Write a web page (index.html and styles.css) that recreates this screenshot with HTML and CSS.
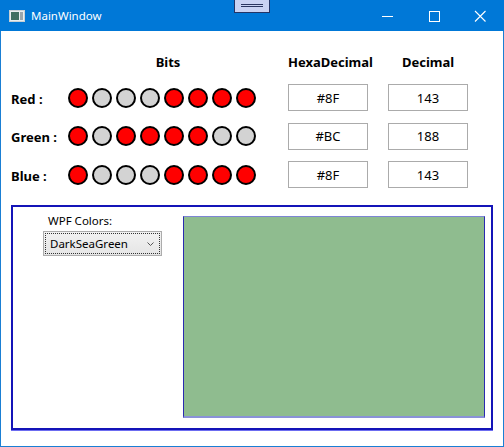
FILE: index.html
```html
<!DOCTYPE html>
<html>
<head>
<meta charset="utf-8">
<link rel="stylesheet" href="styles.css">
</head>
<body>
<div class="window">
  <div class="titlebar">
    <svg class="appicon" width="16" height="12" viewBox="0 0 16 12">
      <rect x="0.5" y="0.5" width="15" height="11" fill="#e8eef0" stroke="#c8d0d4"/>
      <rect x="2" y="2" width="8" height="8" fill="#3f6f62"/>
      <rect x="11" y="2" width="3" height="8" fill="#9aa6ac"/>
    </svg>
    <span class="title">MainWindow</span>
    <div class="handle"><span></span><span></span></div>
    <div class="controls">
      <svg class="ctl" width="46" height="30" viewBox="0 0 46 30"><line x1="17" y1="15.5" x2="28" y2="15.5" stroke="#fff" stroke-width="1"/></svg>
      <svg class="ctl" width="46" height="30" viewBox="0 0 46 30"><rect x="18.5" y="10.5" width="10" height="10" fill="none" stroke="#fff" stroke-width="1"/></svg>
      <svg class="ctl" width="46" height="30" viewBox="0 0 46 30"><path d="M18 10 L28.5 20.5 M28.5 10 L18 20.5" stroke="#fff" stroke-width="1.1"/></svg>
    </div>
  </div>
  <div class="content">
    <div class="grid">
      <div></div>
      <div class="head bitshead">Bits</div>
      <div class="head">HexaDecimal</div>
      <div class="head">Decimal</div>

      <div class="label">Red :</div>
      <div class="bits">
        <span class="bit on"></span><span class="bit"></span><span class="bit"></span><span class="bit"></span><span class="bit on"></span><span class="bit on"></span><span class="bit on"></span><span class="bit on"></span>
      </div>
      <div class="box">#8F</div>
      <div class="box">143</div>

      <div class="label">Green :</div>
      <div class="bits">
        <span class="bit on"></span><span class="bit"></span><span class="bit on"></span><span class="bit on"></span><span class="bit on"></span><span class="bit on"></span><span class="bit"></span><span class="bit"></span>
      </div>
      <div class="box">#BC</div>
      <div class="box">188</div>

      <div class="label">Blue :</div>
      <div class="bits">
        <span class="bit on"></span><span class="bit"></span><span class="bit"></span><span class="bit"></span><span class="bit on"></span><span class="bit on"></span><span class="bit on"></span><span class="bit on"></span>
      </div>
      <div class="box">#8F</div>
      <div class="box">143</div>
    </div>

    <div class="panel">
      <div class="left">
        <div class="wpf">WPF Colors:</div>
        <div class="combo">
          <div class="focus">
            <span>DarkSeaGreen</span>
            <svg width="7" height="4" viewBox="0 0 7 4"><path d="M0.5 0.5 L3.5 3.5 L6.5 0.5" fill="none" stroke="#555" stroke-width="1"/></svg>
          </div>
        </div>
      </div>
      <div class="swatch"></div>
    </div>
  </div>
</div>
</body>
</html>
```
FILE: styles.css
```css
* { box-sizing: border-box; }
html, body { margin: 0; padding: 0; }
body {
  font-family: "Noto Sans", "Open Sans", sans-serif;
  font-size: 12px;
  color: #000;
  background: #fff;
}
.window {
  width: 504px;
  height: 447px;
  display: flex;
  flex-direction: column;
  border: 1px solid #1a7fd4;
  border-top: none;
  background: #fff;
}
.titlebar {
  height: 31px;
  margin: 0 -1px;
  background: #0078d7;
  display: flex;
  align-items: center;
  position: relative;
  color: #fff;
}
.appicon { margin-left: 9px; }
.title {
  margin-left: 6px;
  font-size: 11.5px;
  line-height: 16px;
}
.handle {
  position: absolute;
  left: 234px;
  top: 0;
  width: 36px;
  height: 13px;
  background: #c9d2f3;
  border: 1px solid #233466;
  border-top: none;
  display: flex;
  flex-direction: column;
  align-items: center;
  padding-top: 4px;
  gap: 1px;
}
.handle span {
  display: block;
  width: 22px;
  height: 1px;
  background: #2a3560;
}
.controls {
  margin-left: auto;
  display: flex;
  margin-right: 1px;
}
.ctl { display: block; }

.content {
  flex: 1;
  display: flex;
  flex-direction: column;
}
.grid {
  display: grid;
  grid-template-columns: 57px 188px 112px 100px;
  grid-template-rows: 19.5px 27px 27px 27px;
  row-gap: 11.5px;
  padding-top: 22px;
  padding-left: 10px;
}
.grid > :nth-child(4n+3) { margin-left: 32px; }
.grid > :nth-child(4n+4) { margin-left: 20px; }
.head {
  font-weight: bold;
  font-size: 13px;
  text-align: center;
  line-height: 18px;
  align-self: start;
}
.bitshead { padding-left: 12px; }
.label {
  font-weight: bold;
  font-size: 13px;
  align-self: center;
  line-height: 18px;
  margin-top: 2px;
}
.bits {
  display: flex;
  gap: 4px;
  align-items: center;
}
.bit {
  width: 20px;
  height: 20px;
  border-radius: 50%;
  border: 2px solid #000;
  background: #d3d3d3;
}
.bit.on { background: #ff0000; }
.box {
  width: 80px;
  height: 27px;
  border: 1px solid #ababab;
  display: flex;
  align-items: center;
  justify-content: center;
  font-size: 13px;
  color: #000;
}
.panel {
  margin: 17px 0 0 10px;
  width: 482px;
  height: 225px;
  border: 2px solid #1414b8;
  box-shadow: 0 1px 0 #6c6cf0;
  display: flex;
  gap: 21px;
  padding: 4px 6px 10px 30px;
}
.left {
  width: 119px;
  flex: none;
}
.wpf {
  margin-left: 5px;
  margin-top: 2px;
  line-height: 16px;
  font-size: 11.5px;
}
.combo {
  margin-top: 2px;
  height: 25px;
  border: 1px solid #acacac;
  background: linear-gradient(#f2f2f2, #e5e5e5);
  padding: 1px;
}
.focus {
  height: 100%;
  border: 1px dotted #333;
  display: flex;
  align-items: center;
  justify-content: space-between;
  padding: 0 5px 0 4px;
}
.focus span { line-height: 16px; font-size: 11.5px; }
.swatch {
  flex: 1;
  margin-top: 5px;
  background: #8fbc8f;
  border: 1px solid #2a2ab0;
  border-top-color: #7d86d4;
  border-bottom: 2px solid #8a92d8;
}
```
